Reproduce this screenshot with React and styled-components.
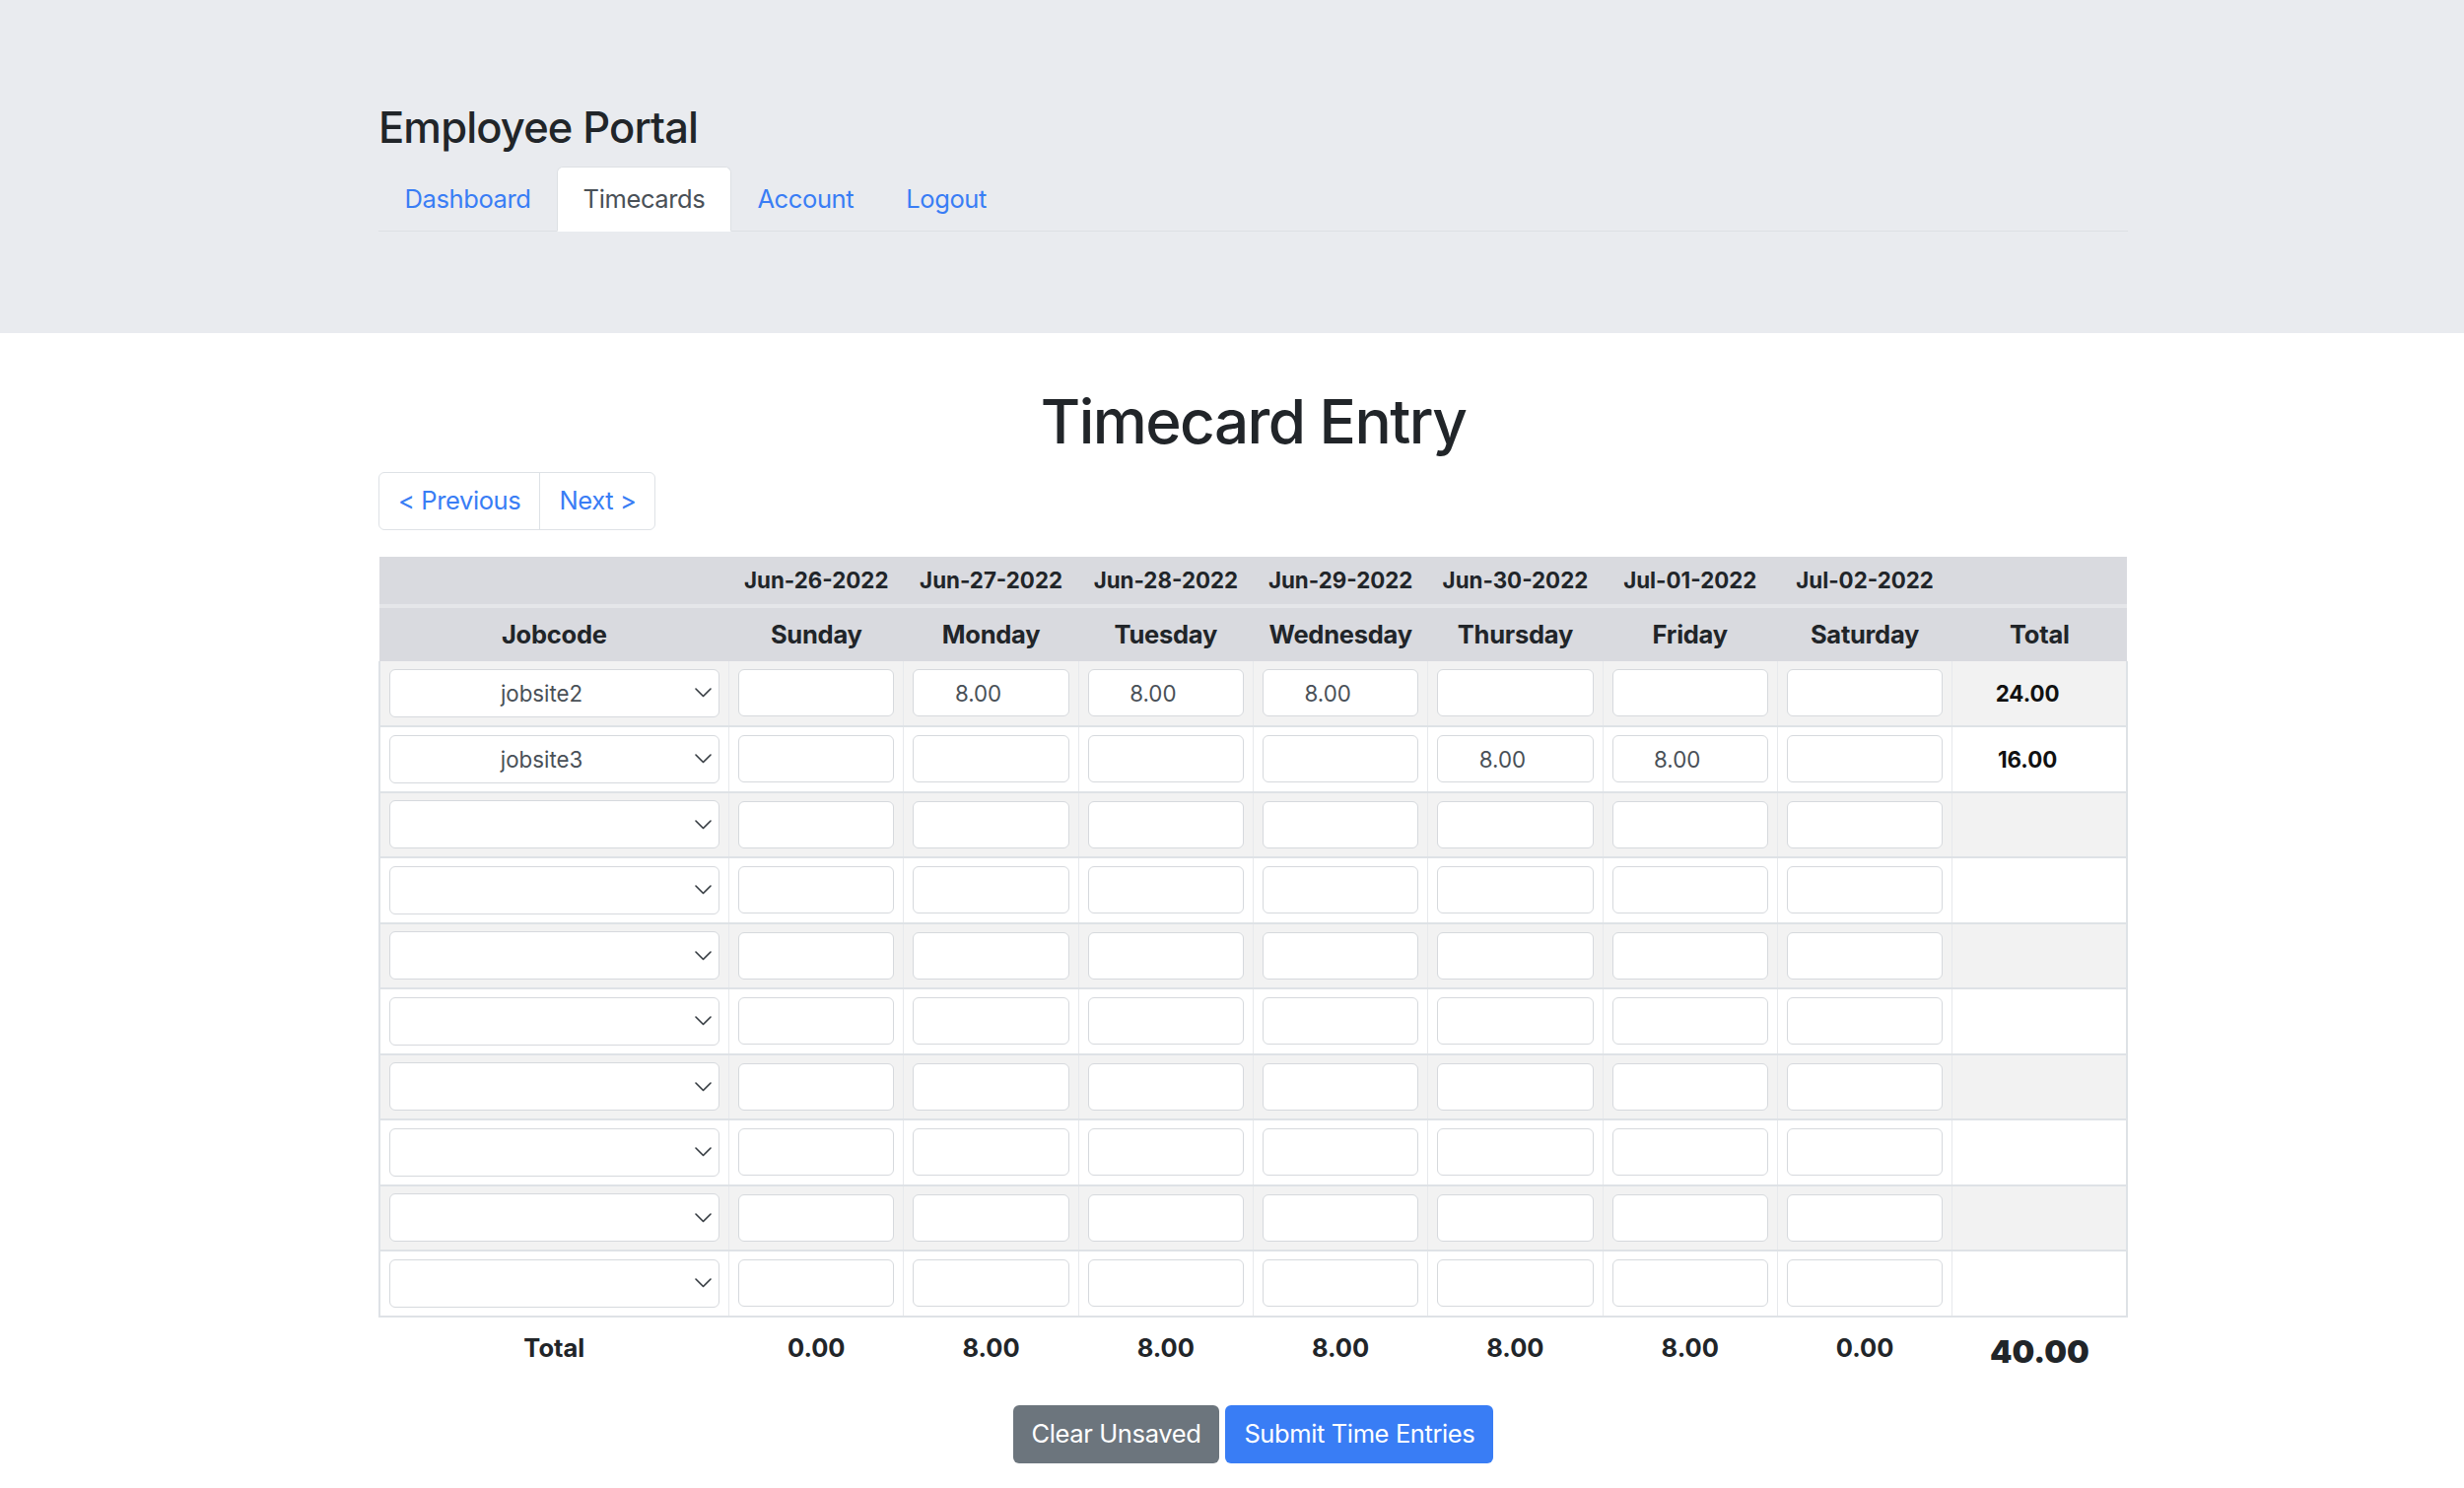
import React from 'react';
import styled, { createGlobalStyle } from 'styled-components';

const GlobalStyle = createGlobalStyle`
  *, *::before, *::after {
    box-sizing: border-box;
  }

  html, body {
    margin: 0;
    padding: 0;
  }

  body {
    font-family: Inter, "Noto Sans", "Liberation Sans", sans-serif;
    font-size: 25.5px;
    line-height: 1.5;
    letter-spacing: -0.015em;
    color: #212529;
    background: #fff;
  }
`;

const Container = styled.div`
  width: 1775px;
  margin-left: calc(50% - 866px);
`;

const Header = styled.header`
  background: #e9ebef;
  padding: 103px 0;
`;

const Brand = styled.h3`
  margin: 0 0 12.75px;
  font-size: 43.5px;
  font-weight: 500;
  line-height: 53.5px;
  letter-spacing: -0.02em;
`;

const Tabs = styled.nav`
  display: flex;
  border-bottom: 1.5px solid #dde0e4;
`;

const Tab = styled.a`
  display: block;
  margin-bottom: -1.5px;
  padding: 12.75px 25.5px;
  border: 1.5px solid transparent;
  border-color: ${(p) => (p.$active ? '#dde0e4 #dde0e4 #fff' : 'transparent')};
  border-radius: 6px 6px 0 0;
  background: ${(p) => (p.$active ? '#fff' : 'transparent')};
  color: ${(p) => (p.$active ? '#495057' : '#397df5')};
  font-size: 25.5px;
  line-height: 38.25px;
  text-decoration: none;
  cursor: pointer;
`;

const Main = styled.main`
  padding: 52px 0 60px;
`;

const PageTitle = styled.h1`
  margin: 0 0 12.75px;
  text-align: center;
  font-size: 62px;
  font-weight: 500;
  line-height: 76.5px;
  letter-spacing: -0.025em;
`;

const Pager = styled.div`
  display: flex;
  width: fit-content;
  margin-bottom: 27px;
  border: 1.5px solid #dee2e6;
  border-radius: 6px;
`;

const PagerButton = styled.button`
  padding: 9.5px 19px;
  border: none;
  border-left: ${(p) => (p.$divided ? '1.5px solid #dee2e6' : 'none')};
  background: transparent;
  color: #397df5;
  font-family: inherit;
  font-size: 25.5px;
  line-height: 38.25px;
  letter-spacing: inherit;
  cursor: pointer;
`;

const Grid = styled.table`
  width: 100%;
  table-layout: fixed;
  border-collapse: collapse;
`;

const HeadCell = styled.th`
  padding: ${(p) => (p.$date ? '7px 4px' : '8px 4px')};
  background: #d9dadf;
  border-bottom: ${(p) => (p.$date ? '4px solid #e5e6e9' : 'none')};
  font-size: ${(p) => (p.$date ? '22.3px' : '25.5px')};
  font-weight: 700;
  line-height: ${(p) => (p.$date ? '33.5px' : '38px')};
  letter-spacing: ${(p) => (p.$date ? '0' : '-0.01em')};
  text-align: center;
  white-space: nowrap;
`;

const BodyRow = styled.tr`
  background: ${(p) => (p.$striped ? '#f2f2f2' : '#fff')};
`;

const Cell = styled.td`
  height: 66.5px;
  padding: 0 9px;
  border-bottom: 2px solid #dee2e6;
  border-right: 1px solid #e7e9ec;
  vertical-align: middle;

  &:first-child {
    border-left: 2px solid #dee2e6;
  }

  &:last-child {
    border-right: 2px solid #dee2e6;
  }
`;

const RowTotal = styled(Cell)`
  padding-right: 33px;
  color: #111;
  font-size: 22.3px;
  font-weight: 700;
  letter-spacing: 0;
  text-align: center;
`;

const SelectWrap = styled.div`
  position: relative;
`;

const JobSelect = styled.select`
  display: block;
  width: 100%;
  height: 49px;
  padding: 0 34px 0 8px;
  border: 1.5px solid #d6d9dd;
  border-radius: 6px;
  background: #fff;
  color: #495057;
  font-family: inherit;
  font-size: 22.3px;
  text-align: center;
  text-align-last: center;
  appearance: none;
  -webkit-appearance: none;
`;

const Chevron = styled.svg`
  position: absolute;
  top: 50%;
  right: 8px;
  width: 17px;
  height: 10px;
  margin-top: -5px;
  pointer-events: none;
`;

const HoursInput = styled.input`
  display: block;
  width: 100%;
  height: 48px;
  padding: 0 34px 0 8px;
  border: 1.5px solid #d6d9dd;
  border-radius: 6px;
  background: #fff;
  color: #495057;
  font-family: inherit;
  font-size: 22.3px;
  text-align: center;
`;

const FootCell = styled.td`
  padding: 12px 4px 9px;
  font-size: ${(p) => (p.$grand ? '32px' : '25.5px')};
  font-weight: ${(p) => (p.$grand ? 900 : 700)};
  line-height: ${(p) => (p.$grand ? '46px' : '38px')};
  letter-spacing: 0;
  text-align: center;
  vertical-align: ${(p) => (p.$grand ? 'bottom' : 'top')};
`;

const Actions = styled.div`
  display: flex;
  justify-content: center;
  gap: 6px;
  margin-top: 22px;
`;

const ActionButton = styled.button`
  padding: 10.5px 19px;
  border: none;
  border-radius: 6px;
  background: ${(p) => (p.$primary ? '#397df5' : '#6c757d')};
  color: #fff;
  font-family: inherit;
  font-size: 25.5px;
  line-height: 38.25px;
  letter-spacing: inherit;
  cursor: pointer;
`;

const dates = [
  ['Jun-26-2022', 'Sunday'],
  ['Jun-27-2022', 'Monday'],
  ['Jun-28-2022', 'Tuesday'],
  ['Jun-29-2022', 'Wednesday'],
  ['Jun-30-2022', 'Thursday'],
  ['Jul-01-2022', 'Friday'],
  ['Jul-02-2022', 'Saturday'],
];

const blank = ['', '', '', '', '', '', ''];

const rows = [
  { job: 'jobsite2', hours: ['', '8.00', '8.00', '8.00', '', '', ''], total: '24.00' },
  { job: 'jobsite3', hours: ['', '', '', '', '8.00', '8.00', ''], total: '16.00' },
  ...Array.from({ length: 8 }, () => ({ job: '', hours: blank, total: '' })),
];

const dayTotals = ['0.00', '8.00', '8.00', '8.00', '8.00', '8.00', '0.00'];

function ChevronIcon() {
  return (
    <Chevron viewBox="0 0 17 10" fill="none">
      <polyline points="1,1 8.5,8.5 16,1" stroke="#343a40" strokeWidth="1.6" strokeLinecap="round" strokeLinejoin="round" />
    </Chevron>
  );
}

export default function App() {
  return (
    <>
      <GlobalStyle />
      <Header>
        <Container>
          <Brand>Employee Portal</Brand>
          <Tabs>
            <Tab>Dashboard</Tab>
            <Tab $active>Timecards</Tab>
            <Tab>Account</Tab>
            <Tab>Logout</Tab>
          </Tabs>
        </Container>
      </Header>

      <Main>
        <Container>
          <PageTitle>Timecard Entry</PageTitle>
          <Pager>
            <PagerButton type="button">&lt; Previous</PagerButton>
            <PagerButton type="button" $divided>Next &gt;</PagerButton>
          </Pager>

          <Grid>
            <colgroup>
              <col style={{ width: '20%' }} />
              {dates.map(([d]) => (
                <col key={d} style={{ width: '10%' }} />
              ))}
              <col style={{ width: '10%' }} />
            </colgroup>
            <thead>
              <tr>
                <HeadCell $date />
                {dates.map(([d]) => (
                  <HeadCell $date key={d}>{d}</HeadCell>
                ))}
                <HeadCell $date />
              </tr>
              <tr>
                <HeadCell>Jobcode</HeadCell>
                {dates.map(([d, day]) => (
                  <HeadCell key={day}>{day}</HeadCell>
                ))}
                <HeadCell>Total</HeadCell>
              </tr>
            </thead>
            <tbody>
              {rows.map((row, idx) => (
                <BodyRow key={idx} $striped={idx % 2 === 0}>
                  <Cell>
                    <SelectWrap>
                      <JobSelect defaultValue={row.job}>
                        <option value=""></option>
                        <option value="jobsite1">jobsite1</option>
                        <option value="jobsite2">jobsite2</option>
                        <option value="jobsite3">jobsite3</option>
                      </JobSelect>
                      <ChevronIcon />
                    </SelectWrap>
                  </Cell>
                  {row.hours.map((h, i) => (
                    <Cell key={i}>
                      <HoursInput type="text" defaultValue={h} />
                    </Cell>
                  ))}
                  <RowTotal>{row.total}</RowTotal>
                </BodyRow>
              ))}
            </tbody>
            <tfoot>
              <tr>
                <FootCell>Total</FootCell>
                {dayTotals.map((t, i) => (
                  <FootCell key={i}>{t}</FootCell>
                ))}
                <FootCell $grand>40.00</FootCell>
              </tr>
            </tfoot>
          </Grid>

          <Actions>
            <ActionButton type="button">Clear Unsaved</ActionButton>
            <ActionButton type="button" $primary>Submit Time Entries</ActionButton>
          </Actions>
        </Container>
      </Main>
    </>
  );
}
